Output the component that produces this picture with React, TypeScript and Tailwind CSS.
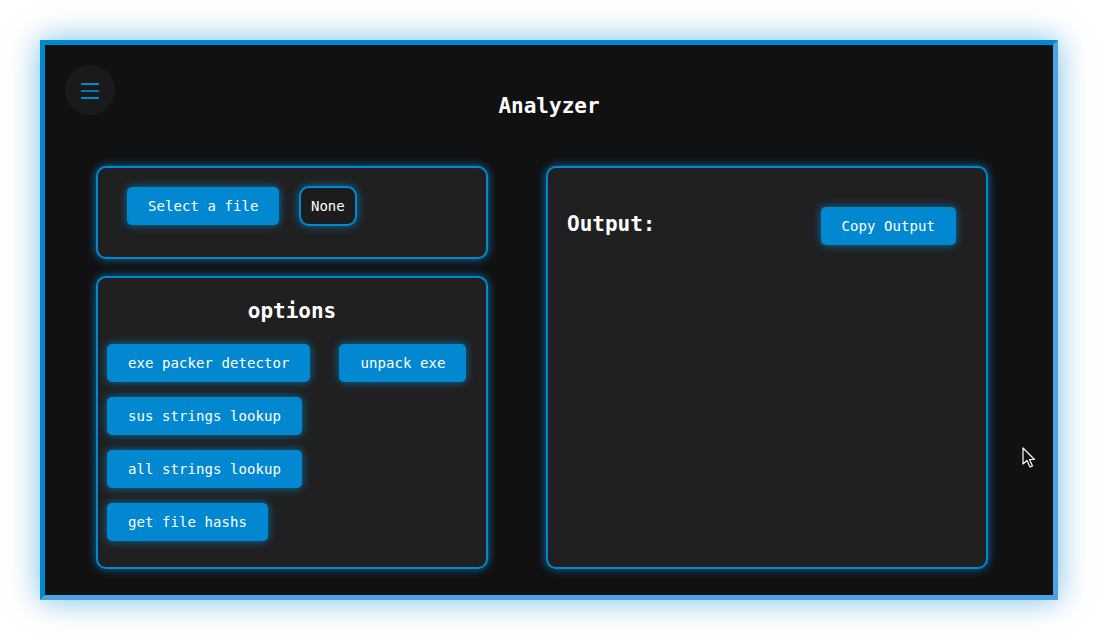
import { useState } from "react";

const mono = { fontFamily: '"DejaVu Sans Mono", "Liberation Mono", monospace' };

const glowCard =
  "rounded-[10px] border-2 border-[#0288d1] bg-[#202020] shadow-[0_0_10px_rgba(2,136,209,0.8)]";
const btn =
  "h-[38px] whitespace-nowrap rounded-[5px] bg-[#0288d1] px-[21px] text-[14px] tracking-[0.07px] text-white shadow-[0_0_8px_rgba(2,136,209,0.8)]";

const options = [
  ["exe packer detector", "unpack exe"],
  ["sus strings lookup"],
  ["all strings lookup"],
  ["get file hashs"],
];

const Cursor = () => (
  <svg className="pointer-events-none absolute left-[977px] top-[402px]" width="16" height="24" viewBox="0 0 16 24">
    <path d="M1 1 L1 17 L5 13.5 L8 20 L10.5 19 L7.5 12.5 L12.5 12.5 Z" fill="#111" stroke="#fff" strokeWidth="1.2" strokeLinejoin="round" />
  </svg>
);

export default function App() {
  const [fileName] = useState("None");
  return (
    <div className="min-h-[640px] bg-white p-[40px]" style={mono}>
      <div className="relative h-[560px] w-[1018px] border-[5px] border-[#0288d1] border-r-[#4ba3e2] border-b-[#4ba3e2] bg-[#111111] shadow-[0_0_30px_rgba(2,136,209,0.55)]">
        <button className="absolute left-5 top-5 flex h-[50px] w-[50px] items-center justify-center rounded-full bg-[#1a1a1a]">
          <svg width="20" height="18" viewBox="0 0 20 18">
            <rect x="1" y="2" width="18" height="2" fill="#0288d1" />
            <rect x="1" y="9" width="18" height="2" fill="#0277b5" />
            <rect x="1" y="16" width="18" height="2" fill="#0288d1" />
          </svg>
        </button>

        <h1 className="pt-[46px] text-center text-[21px] font-bold leading-[30px] text-white">Analyzer</h1>

        <div className="mt-[45px] flex gap-[58px] pl-[51px]">
          <div className="flex w-[392px] flex-col gap-[17px]">
            <div className={`${glowCard} h-[93px] pl-[29px] pt-[18px]`}>
              <div className="flex items-center gap-5">
                <button className={`${btn} w-[152px] px-0`}>Select a file</button>
                <div className="flex h-[40px] items-center rounded-[10px] border-2 border-[#0288d1] bg-[#1c1c1c] px-[10px] text-[14px] text-white shadow-[0_0_8px_rgba(2,136,209,0.8)]">
                  {fileName}
                </div>
              </div>
            </div>

            <div className={`${glowCard} h-[293px] px-[9px]`}>
              <h2 className="pt-[18px] text-center text-[21px] font-bold leading-[30px] text-white">options</h2>
              <div className="mt-[18px] flex flex-col gap-[15px]">
                {options.map((row, i) => (
                  <div key={i} className="flex gap-[29px]">
                    {row.map((label) => (
                      <button key={label} className={btn}>
                        {label}
                      </button>
                    ))}
                  </div>
                ))}
              </div>
            </div>
          </div>

          <div className={`${glowCard} h-[403px] w-[442px] px-[19px]`}>
            <div className="mt-[39px] flex items-center justify-between pr-[11px]">
              <h2 className="mb-[4px] text-[21px] font-bold leading-[32px] text-white">Output:</h2>
              <button className={btn}>Copy Output</button>
            </div>
          </div>
        </div>

        <Cursor />
      </div>
    </div>
  );
}
